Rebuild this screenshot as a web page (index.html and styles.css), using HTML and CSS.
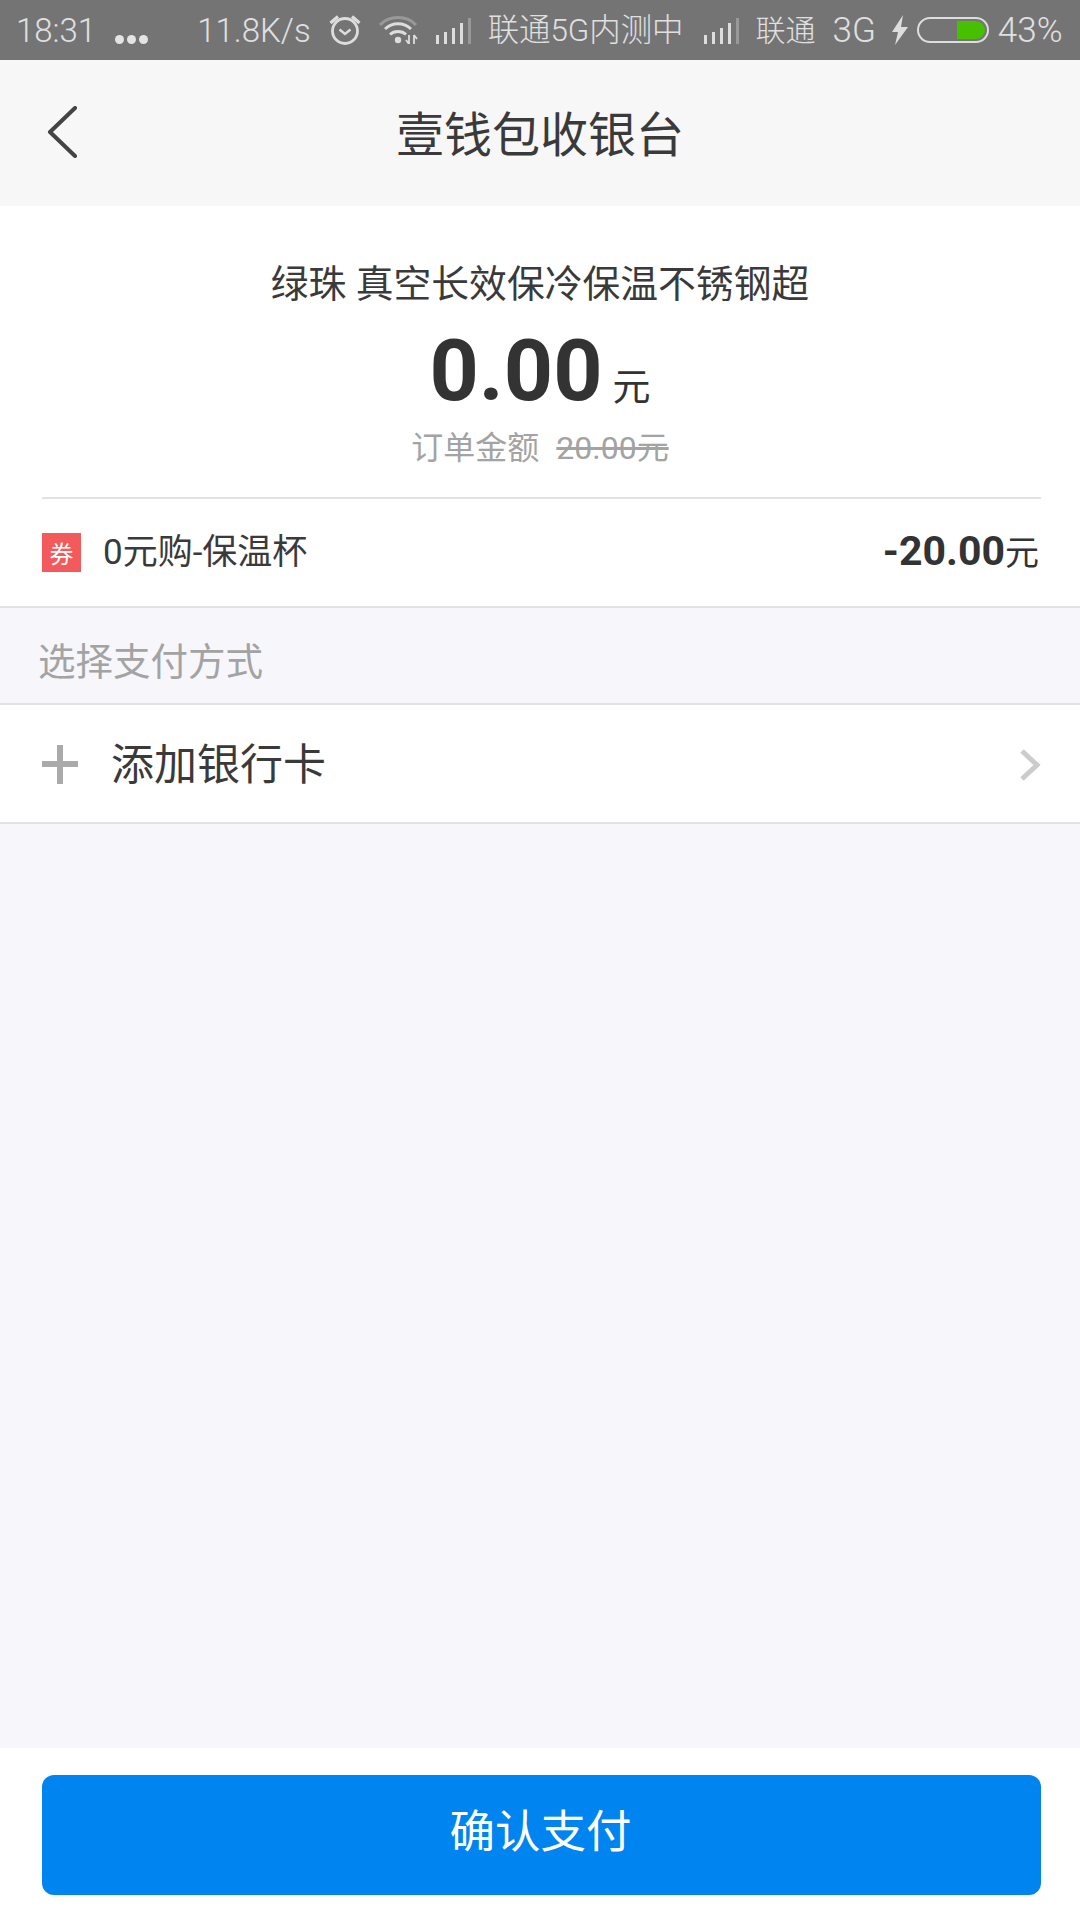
FILE: index.html
```html
<!DOCTYPE html>
<html lang="zh-CN">
<head>
    <meta charset="UTF-8">
    <meta name="viewport" content="width=device-width, initial-scale=1.0">
    <title>壹钱包收银台</title>
    <link rel="stylesheet" href="styles.css">
</head>
<body>
    <div class="page">
        <div class="status-bar">
            <span class="st-text st-time">18:31</span>
            <span class="st-dots"><i></i><i></i><i></i></span>
            <span class="st-text st-speed">11.8K/s</span>
            <svg class="st-alarm" width="32" height="32" viewBox="0 0 32 32" fill="none" stroke="#ddd">
                <circle cx="16" cy="17" r="12.500" stroke-width="2.800"/>
                <path d="M10.500 15.500l5.500 4.500 5.500-4.500" stroke-width="2.400"/>
                <path d="M1.500 9l7.500-6.500M30.500 9L23 2.500" stroke-width="3.200"/>
            </svg>
            <svg class="st-wifi" width="39" height="28" viewBox="0 0 39 28" fill="none">
                <path d="M1 9C10 -1 28 -1 37 9" stroke="#999" stroke-width="3"/>
                <path d="M6 13C13 6 25 6 32 13" stroke="#ddd" stroke-width="2.800"/>
                <path d="M11 18.500C15 14.500 23 14.500 27 18.500" stroke="#ddd" stroke-width="2.800"/>
                <circle cx="19" cy="24" r="3.200" fill="#ddd"/>
                <path d="M30 19v9M30 28l-3-4M35 28v-9M35 19l3 4" stroke="#ddd" stroke-width="1.800"/>
            </svg>
            <svg class="st-signal" width="35" height="28" viewBox="0 0 35 28">
                <rect x="0" y="18" width="3" height="9" fill="#ddd"/>
                <rect x="8" y="15" width="3" height="12" fill="#ddd"/>
                <rect x="16" y="11" width="3" height="16" fill="#ddd"/>
                <rect x="24" y="6" width="3" height="21" fill="#ddd"/>
                <rect x="32" y="1" width="3" height="26" fill="#999"/>
            </svg>
            <span class="st-text st-carrier">联通5G内测中</span>
            <svg class="st-signal st-signal-2" width="35" height="28" viewBox="0 0 35 28">
                <rect x="0" y="18" width="3" height="9" fill="#ddd"/>
                <rect x="8" y="15" width="3" height="12" fill="#ddd"/>
                <rect x="16" y="11" width="3" height="16" fill="#ddd"/>
                <rect x="24" y="6" width="3" height="21" fill="#ddd"/>
                <rect x="32" y="1" width="3" height="26" fill="#999"/>
            </svg>
            <span class="st-text st-carrier-2">联通</span>
            <span class="st-text st-net">3G</span>
            <svg class="st-bolt" width="16" height="30" viewBox="0 0 16 30">
                <path d="M11 0L0 17h6L3 30 16 12H9z" fill="#ddd"/>
            </svg>
            <span class="st-battery"><span class="st-battery-fill"></span></span>
            <span class="st-text st-percent">43%</span>
        </div>

        <div class="nav-bar">
            <svg class="back-icon" width="30" height="52" viewBox="0 0 30 52" fill="none">
                <path d="M28 2L3 26l25 24" stroke="#444" stroke-width="4" stroke-linecap="round" stroke-linejoin="round"/>
            </svg>
            <h1 class="nav-title">壹钱包收银台</h1>
        </div>

        <div class="order">
            <div class="order-name">绿珠 真空长效保冷保温不锈钢超</div>
            <div class="order-amount"><b>0.00</b><span>元</span></div>
            <div class="order-total">订单金额<s>20.00元</s></div>
        </div>

        <div class="coupon-wrap">
            <div class="coupon">
                <span class="coupon-tag">券</span>
                <span class="coupon-name">0元购-保温杯</span>
                <span class="coupon-off"><b>-20.00</b>元</span>
            </div>
        </div>

        <div class="section-title">选择支付方式</div>

        <div class="add-card">
            <span class="plus"></span>
            <span class="add-card-text">添加银行卡</span>
            <svg class="chevron" width="22" height="34" viewBox="0 0 22 34" fill="none">
                <path d="M3 3l15 14L3 31" stroke="#ccc" stroke-width="5"/>
            </svg>
        </div>

        <div class="spacer"></div>

        <div class="footer">
            <button class="pay-btn">确认支付</button>
        </div>
    </div>
</body>
</html>
```

FILE: styles.css
```css
* {
    box-sizing: border-box;
}

body {
    margin: 0;
    font-family: Roboto, "Noto Sans CJK SC", sans-serif;
    color: #333;
    background-color: #f6f6fb;
}

.page {
    display: flex;
    flex-direction: column;
    height: 1920px;
}

/* status bar */
.status-bar {
    display: flex;
    align-items: center;
    height: 60px;
    padding-left: 16px;
    background-color: #747474;
    color: #e0e0e0;
    font-size: 33px;
    font-weight: 300;
    line-height: 60px;
    white-space: nowrap;
}

.st-text {
    padding-top: 2px;
}

.st-dots {
    display: flex;
    gap: 3px;
    margin-left: 19px;
    margin-top: 18px;
}

.st-dots i {
    width: 9px;
    height: 9px;
    border-radius: 50%;
    background-color: #e4e4e4;
}

.st-speed {
    margin-left: 49px;
}

.st-alarm {
    margin-left: 18px;
    margin-top: -1px;
}

.st-wifi {
    margin-left: 18px;
    margin-top: -1px;
}

.st-signal {
    margin-left: 18px;
    margin-top: 1px;
}

.st-carrier {
    margin-left: 17px;
    font-size: 31.400px;
}

.st-signal-2 {
    margin-left: 20px;
}

.st-carrier-2 {
    margin-left: 17px;
    font-size: 30px;
}

.st-net {
    margin-left: 17px;
    font-size: 35px;
}

.st-bolt {
    margin-left: 16px;
}

.st-battery {
    display: flex;
    justify-content: flex-end;
    align-items: center;
    width: 72px;
    height: 26px;
    margin-left: 9px;
    padding-right: 2px;
    border: 2px solid #ddd;
    border-radius: 13px;
}

.st-battery-fill {
    width: 28px;
    height: 18px;
    border-radius: 0 9px 9px 0;
    background-color: #46c000;
}

.st-percent {
    margin-left: 9px;
    font-size: 35px;
}

/* nav */
.nav-bar {
    position: relative;
    display: flex;
    justify-content: center;
    align-items: center;
    height: 146px;
    padding-bottom: 5px;
    background-color: #f7f7f7;
}

.back-icon {
    position: absolute;
    left: 47px;
    top: 46px;
}

.nav-title {
    margin: 0;
    font-size: 48px;
    font-weight: 400;
    color: #3a3a3a;
}

/* order */
.order {
    display: flex;
    flex-direction: column;
    align-items: center;
    height: 291px;
    padding-top: 51px;
    background-color: #fff;
}

.order-name {
    font-size: 37.800px;
    line-height: 54px;
    color: #3a3a3a;
}

.order-amount {
    display: flex;
    align-items: baseline;
    height: 102px;
    margin-top: 9px;
    line-height: 102px;
}

.order-amount b {
    font-size: 86px;
    font-weight: 700;
}

.order-amount span {
    margin-left: 10px;
    font-size: 38px;
}

.order-total {
    margin-top: 2px;
    font-size: 32px;
    line-height: 48px;
    color: #a3a3a3;
}

.order-total s {
    margin-left: 17px;
}

/* coupon */
.coupon-wrap {
    height: 111px;
    padding: 0 39px 0 42px;
    border-bottom: 2px solid #e2e2e2;
    background-color: #fff;
}

.coupon {
    display: flex;
    align-items: center;
    height: 109px;
    padding-bottom: 8px;
    border-top: 2px solid #e2e2e2;
}

.coupon-tag {
    display: flex;
    justify-content: center;
    align-items: center;
    width: 39px;
    height: 39px;
    margin-top: 8px;
    background-color: #f25a5c;
    color: #fff;
    font-size: 24px;
}

.coupon-name {
    margin-left: 22px;
    font-size: 35px;
    color: #3a3a3a;
}

.coupon-off {
    margin-left: auto;
    margin-right: 2px;
    margin-top: 3px;
    font-size: 34px;
}

.coupon-off b {
    font-size: 41px;
    font-weight: 700;
}

/* payment */
.section-title {
    display: flex;
    align-items: center;
    height: 97px;
    padding-left: 38px;
    padding-top: 6px;
    border-bottom: 2px solid #e2e2e2;
    font-size: 37.500px;
    color: #a3a3a3;
}

.add-card {
    display: flex;
    align-items: center;
    height: 119px;
    padding: 0 39px 0 42px;
    border-bottom: 2px solid #e2e2e2;
    background-color: #fff;
}

.plus {
    position: relative;
    width: 36px;
    height: 39px;
    margin-top: 2px;
}

.plus::before,
.plus::after {
    content: "";
    position: absolute;
    background-color: #aaa;
}

.plus::before {
    left: 0;
    top: 16px;
    width: 36px;
    height: 6px;
}

.plus::after {
    left: 15px;
    top: 0;
    width: 6px;
    height: 39px;
}

.add-card-text {
    margin-left: 33px;
    padding-bottom: 5px;
    font-size: 43px;
    color: #3a3a3a;
}

.chevron {
    margin-left: auto;
    margin-top: 2px;
}

.spacer {
    flex: 1;
}

/* footer */
.footer {
    height: 172px;
    padding: 27px 39px 0 42px;
    background-color: #fff;
}

.pay-btn {
    display: block;
    width: 100%;
    height: 120px;
    padding: 0 2px 14px 0;
    border: none;
    border-radius: 12px;
    background-color: #0084f0;
    color: #fff;
    font-family: inherit;
    font-size: 45.500px;
}
```
